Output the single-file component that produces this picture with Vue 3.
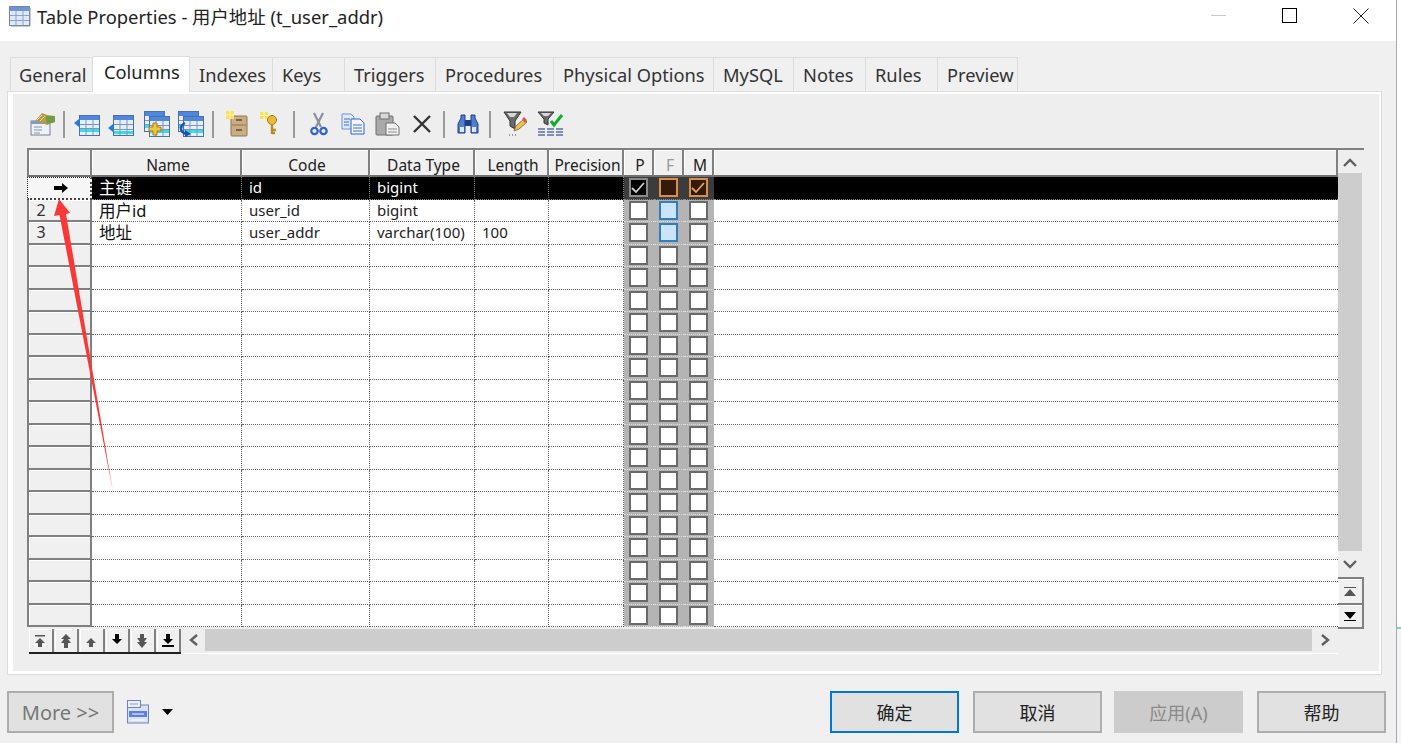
<template>
  <div class="screen">
    <div class="window">
      <div class="titlebar">
        <svg class="title-icon" width="22" height="21" viewBox="0 0 22 21">
          <rect x="0.5" y="0.5" width="20" height="19" fill="#dfe8f6" stroke="#6f87aa" />
          <rect x="1" y="1" width="19" height="4" fill="#6f93d6" />
          <path d="M1 9.5h19M1 14.5h19M7 5v14M14 5v14" stroke="#8ba3cc" fill="none" />
          <path d="M21 2v18H2" stroke="#8f8f8f" fill="none" />
        </svg>
        <span class="title-text">Table Properties - 用户地址 (t_user_addr)</span>
        <div class="win-controls">
          <svg width="16" height="16" viewBox="0 0 16 16"><path d="M0 7.5h15" stroke="#c8c8c8" /></svg>
          <svg width="16" height="16" viewBox="0 0 16 16"><rect x="0.5" y="0.5" width="14" height="14" fill="none" stroke="#000" /></svg>
          <svg width="16" height="16" viewBox="0 0 16 16"><path d="M0.5 0.5l15 15M15.5 0.5l-15 15" stroke="#222" fill="none" /></svg>
        </div>
      </div>

      <div class="tabs">
        <div
          v-for="tab in tabs"
          :key="tab.label"
          class="tab"
          :class="{ active: tab.label === 'Columns' }"
          :style="{ width: tab.width + 'px' }"
        >
          {{ tab.label }}
        </div>
      </div>

      <div class="panel">
        <div class="panel-inner">
          <div class="toolbar">
            <!-- properties -->
            <svg class="tool" style="margin-left:2px" width="26" height="24" viewBox="0 0 26 24">
              <rect x="1" y="9" width="19" height="14" fill="#eef2f8" stroke="#77808f" />
              <rect x="1" y="9" width="19" height="3" fill="#7d9cc9" />
              <path d="M4 15h8M4 18h8M4 21h6" stroke="#8a94a5" />
              <path d="M5 9l7-8 5 2 8 1v6l-8 3-5-2z" fill="#b49a4a" />
              <path d="M16 4l9 0v6l-8 2z" fill="#6b9e45" />
              <path d="M7 8l5-5M10 9l5-5" stroke="#f2dc8c" />
            </svg>
            <i class="sep" />
            <svg class="tool" style="margin-left:-2px" width="26" height="24" viewBox="0 0 26 24"><use href="#tbl" x="5" y="3" /><path d="M0 11l5-4v8z" fill="#1c7fe0" /></svg>
            <svg class="tool" style="margin-left:8px" width="26" height="24" viewBox="0 0 26 24"><use href="#tbl2" x="5" y="3" /><path d="M0 16l5-4v8z" fill="#1c7fe0" /></svg>
            <svg class="tool" style="margin-left:10px" width="26" height="26" viewBox="0 0 26 26">
              <use href="#tbl" x="0" y="0" />
              <use href="#tbl" x="5" y="5" />
              <path d="M5 16h4v-4h4v4h4v4h-4v4H9v-4H5z" fill="#f2c53a" stroke="#a67e14" />
            </svg>
            <svg class="tool" style="margin-left:8px" width="26" height="26" viewBox="0 0 26 26">
              <use href="#tbl" x="0" y="0" />
              <use href="#tbl" x="5" y="5" />
              <path d="M7 12c-6 3-5 9 1 11" fill="none" stroke="#1d4fb3" stroke-width="2.4" />
              <path d="M7 19l6 4-6 3z" fill="#1d4fb3" />
            </svg>
            <i class="sep" style="margin-left:8px" />
            <!-- new file cabinet -->
            <svg class="tool" width="24" height="26" viewBox="0 0 24 26">
              <rect x="6" y="5" width="16" height="20" rx="1" fill="#c9ad85" stroke="#8e7550" />
              <path d="M7 14h14" stroke="#8e7550" />
              <path d="M11 9h6M11 19h6" stroke="#5f4b2e" stroke-width="1.5" />
              <rect x="1" y="0" width="8" height="8" fill="#f8e25a" />
              <path d="M5 0v8M1 4h8" stroke="#fff8c0" />
            </svg>
            <!-- new key -->
            <svg class="tool" style="margin-left:10px" width="22" height="24" viewBox="0 0 22 24">
              <rect x="1" y="0" width="8" height="7" fill="#f8e25a" />
              <path d="M5 0v7M1 3.500h8" stroke="#fff8c0" />
              <circle cx="13" cy="8" r="4.500" fill="#e8b93a" stroke="#a67e14" />
              <path d="M13 12v10M13 18h4M13 21h3" stroke="#b88c1d" stroke-width="2.4" fill="none" />
            </svg>
            <i class="sep" style="margin-left:12px" />
            <!-- cut -->
            <svg class="tool" style="margin-left:4px" width="18" height="24" viewBox="0 0 18 24">
              <path d="M4 1l7 14M13 1L6 15" stroke="#8b8f96" stroke-width="2.2" fill="none" />
              <circle cx="4.500" cy="19" r="3.200" fill="none" stroke="#2f62c9" stroke-width="2.2" />
              <circle cx="13.500" cy="19" r="3.200" fill="none" stroke="#2f62c9" stroke-width="2.2" />
            </svg>
            <!-- copy -->
            <svg class="tool" style="margin-left:13px" width="24" height="22" viewBox="0 0 24 22">
              <path d="M1 1h9l3 3v12H1z" fill="#dfe9fb" stroke="#6f93d6" />
              <path d="M10 6h9l4 4v11H10z" fill="#f2f6fe" stroke="#2f62c9" />
              <path d="M12 12h9M12 15h9M12 18h9M3 6h6M3 9h5M3 12h5" stroke="#3c6fd0" />
            </svg>
            <!-- paste -->
            <svg class="tool" style="margin-left:10px" width="25" height="24" viewBox="0 0 25 24">
              <rect x="1" y="4" width="17" height="19" rx="1" fill="#a9a9a9" stroke="#6e6e6e" />
              <rect x="5" y="1" width="9" height="6" fill="#d8d8d8" stroke="#6e6e6e" />
              <path d="M11 11h9l4 4v8H11z" fill="#f2f2f2" stroke="#6e6e6e" />
              <path d="M13 17h9M13 20h9" stroke="#8a8a8a" />
            </svg>
            <!-- delete -->
            <svg class="tool" style="margin-left:12px" width="20" height="20" viewBox="0 0 20 20">
              <path d="M2 2l16 16M18 2L2 18" stroke="#333" stroke-width="2.4" />
            </svg>
            <i class="sep" style="margin-left:11px" />
            <!-- find -->
            <svg class="tool" width="24" height="22" viewBox="0 0 24 22">
              <path d="M2 20V11l3-6V2h4v18z" fill="#4f7fd0" stroke="#1f3f85" />
              <path d="M22 20V11l-3-6V2h-4v18z" fill="#4f7fd0" stroke="#1f3f85" />
              <rect x="9" y="7" width="6" height="6" fill="#1f3f85" />
              <rect x="4" y="14" width="4" height="5" fill="#dfe9fb" />
              <rect x="16" y="14" width="4" height="5" fill="#dfe9fb" />
            </svg>
            <i class="sep" style="margin-left:9px" />
            <!-- filter + pencil -->
            <svg class="tool" style="margin-left:1px" width="26" height="26" viewBox="0 0 26 26">
              <path d="M1 1h17l-6 9v8l-5-3v-5z" fill="#6b6b6b" stroke="#333" />
              <path d="M4 2h10l-3 4H7z" fill="#d8d8d8" />
              <path d="M11 20l2-5 8-7 3 3-8 7z" fill="#efc24a" stroke="#8e7550" />
              <path d="M19 8l2-2 3 3-2 3z" fill="#d8584a" />
              <path d="M6 24h1M9 24h1M12 24h1" stroke="#444" />
            </svg>
            <!-- filter + check -->
            <svg class="tool" style="margin-left:8px" width="27" height="26" viewBox="0 0 27 26">
              <path d="M1 1h16l-6 7v6l-4-2V8z" fill="#6b6b6b" stroke="#333" />
              <path d="M4 2h10l-3 3H7z" fill="#d8d8d8" />
              <path d="M14 10l3 4 8-10" fill="none" stroke="#0fae2a" stroke-width="3" />
              <path d="M1 18h7M10 18h7M19 18h7M1 21h7M10 21h7M19 21h7M1 24h7M10 24h7M19 24h7" stroke="#5a6fa8" stroke-width="1.6" />
            </svg>
          </div>

          <div class="grid-frame">
            <div class="table">
              <div v-for="col in columns" :key="col.label" class="head-cell" :class="{ dim: col.dim }">
                {{ col.label }}
              </div>
              <template v-for="(row, i) in rows" :key="i">
                <div class="row-head" :class="{ current: i === 0 }">
                  <svg v-if="i === 0" width="14" height="10" viewBox="0 0 14 10">
                    <path d="M0 3h8V0l6 5-6 5V7H0z" fill="#000" />
                  </svg>
                  <span v-else-if="row.name">{{ i + 1 }}</span>
                </div>
                <div class="cell cell-name" :class="{ sel: i === 0 }">{{ row.name }}</div>
                <div class="cell" :class="{ sel: i === 0 }">{{ row.code }}</div>
                <div class="cell" :class="{ sel: i === 0 }">{{ row.type }}</div>
                <div class="cell" :class="{ sel: i === 0 }">{{ row.length }}</div>
                <div class="cell" :class="{ sel: i === 0 }"></div>
                <div v-for="flag in ['p', 'f', 'm']" :key="flag" class="check-cell" :class="{ sel: i === 0 }">
                  <span class="box" :class="boxClass(row, flag, i)">
                    <svg v-if="row[flag]" width="14" height="12" viewBox="0 0 14 12">
                      <path d="M1 6l4 4 8-9" fill="none" stroke-width="1.800" />
                    </svg>
                  </span>
                </div>
                <div class="cell cell-last" :class="{ sel: i === 0 }"></div>
              </template>
            </div>

            <div class="vbar">
              <div class="v-arrow">
                <svg width="14" height="9" viewBox="0 0 14 9"><path d="M1 8l6-6 6 6" fill="none" stroke="#606060" stroke-width="2.400" /></svg>
              </div>
              <div class="v-thumb" />
              <div class="v-arrow v-arrow-down">
                <svg width="14" height="9" viewBox="0 0 14 9"><path d="M1 1l6 6 6-6" fill="none" stroke="#606060" stroke-width="2.400" /></svg>
              </div>
              <div class="v-btn">
                <svg width="12" height="9" viewBox="0 0 12 9"><path d="M0 0h12v1H0zM6 2l6 7H0z" fill="#555" /></svg>
              </div>
              <div class="v-btn">
                <svg width="12" height="9" viewBox="0 0 12 9"><path d="M0 8h12v1H0zM6 7L0 0h12z" fill="#000" /></svg>
              </div>
            </div>

            <div class="hbar">
              <div class="nav">
                <button v-for="btn in navButtons" :key="btn.d" class="nav-btn">
                  <svg width="16" height="16" viewBox="0 0 16 16"><path :d="btn.d" :fill="btn.dark ? '#000' : '#555'" /></svg>
                </button>
              </div>
              <div class="h-arrow">
                <svg width="9" height="12" viewBox="0 0 9 12"><path d="M8 1L2 6l6 5" fill="none" stroke="#606060" stroke-width="2.400" /></svg>
              </div>
              <div class="h-thumb" />
              <div class="h-arrow h-arrow-right">
                <svg width="9" height="12" viewBox="0 0 9 12"><path d="M1 1l6 5-6 5" fill="none" stroke="#606060" stroke-width="2.400" /></svg>
              </div>
            </div>
          </div>
        </div>
      </div>

      <div class="footer">
        <button class="btn btn-more">More &gt;&gt;</button>
        <svg class="save-icon" width="22" height="24" viewBox="0 0 22 24">
          <rect x="0.500" y="5" width="21" height="18" fill="#d8e2f2" stroke="#6f87aa" />
          <rect x="0.500" y="0.500" width="13" height="7" fill="#e8eef8" stroke="#6f87aa" />
          <path d="M3 4h8" stroke="#8ba3cc" />
          <rect x="2" y="11" width="18" height="6" fill="#5c7fe8" />
          <path d="M5 14h12M4 20h14" stroke="#fff" />
        </svg>
        <svg class="drop-icon" width="11" height="6" viewBox="0 0 11 6"><path d="M0 0h11L5.500 6z" fill="#000" /></svg>
        <div class="footer-actions">
          <button class="btn btn-default">确定</button>
          <button class="btn btn-gap">取消</button>
          <button class="btn btn-disabled">应用(A)</button>
          <button class="btn btn-gap">帮助</button>
        </div>
      </div>
    </div>

    <div class="edge">
      <div class="edge-top" />
      <div class="edge-line" />
    </div>

    <!-- red annotation arrow drawn over the grid -->
    <svg class="annotation" width="70" height="300" viewBox="0 0 70 300">
      <path d="M12 2L23 16 19 17 66 295 12.500 18 7 19z" fill="#fb3838" />
    </svg>

    <svg width="0" height="0" class="defs">
      <symbol id="tbl" viewBox="0 0 21 21" width="21" height="21">
        <rect x="0.500" y="0.500" width="20" height="20" fill="#e6eefb" stroke="#4f6f9f" />
        <rect x="1" y="1" width="19" height="4" fill="#4f87e0" />
        <rect x="1" y="14" width="19" height="3" fill="#35dfe6" />
        <path d="M1 9.500h19M1 13.500h19M7 5v15M14 5v15" stroke="#7f95b8" fill="none" />
      </symbol>
      <symbol id="tbl2" viewBox="0 0 21 21" width="21" height="21">
        <rect x="0.500" y="0.500" width="20" height="20" fill="#e6eefb" stroke="#4f6f9f" />
        <rect x="1" y="1" width="19" height="4" fill="#4f87e0" />
        <rect x="1" y="16" width="19" height="3" fill="#35dfe6" />
        <path d="M1 9.500h19M1 14.500h19M7 5v15M14 5v15" stroke="#7f95b8" fill="none" />
      </symbol>
    </svg>
  </div>
</template>

<script setup>
const tabs = [
  { label: "General", width: 83 },
  { label: "Columns", width: 97 },
  { label: "Indexes", width: 83 },
  { label: "Keys", width: 72 },
  { label: "Triggers", width: 91 },
  { label: "Procedures", width: 118 },
  { label: "Physical Options", width: 160 },
  { label: "MySQL", width: 80 },
  { label: "Notes", width: 72 },
  { label: "Rules", width: 72 },
  { label: "Preview", width: 80 },
];

const columns = [
  { label: "" },
  { label: "Name" },
  { label: "Code" },
  { label: "Data Type" },
  { label: "Length" },
  { label: "Precision" },
  { label: "P" },
  { label: "F", dim: true },
  { label: "M" },
  { label: " " },
];

const filled = [
  { name: "主键", code: "id", type: "bigint", length: "", p: true, f: false, m: true },
  { name: "用户id", code: "user_id", type: "bigint", length: "", fk: true },
  { name: "地址", code: "user_addr", type: "varchar(100)", length: "100", fk: true },
];
const rows = [...filled, ...Array.from({ length: 17 }, () => ({}))];

const navButtons = [
  { d: "M3 2h10v1.500H3zM8 5l5 5h-3v4H6v-4H3z" },
  { d: "M8 1l5 5h-3l3 4h-3v5H6v-5H3l3-4H3z" },
  { d: "M8 5l5 5h-3v4H6v-4H3z" },
  { d: "M6 1h4v5h3l-5 5-5-5h3z", dark: true },
  { d: "M6 1h4v4h3l-3 4h3l-5 6-5-6h3L3 5h3z" },
  { d: "M6 1h4v5h3l-5 5-5-5h3zM2 12h12v2H2z", dark: true },
];

const boxClass = (row, flag, i) => {
  if (i === 0) return flag === "p" ? "box-sel" : "box-sel-key";
  if (flag === "f" && row.fk) return "box-fk";
  return "";
};
</script>

<style>
html,
body {
  margin: 0;
  overflow: hidden;
  background: #fff;
}
</style>

<style scoped>
.screen {
  position: relative;
  display: flex;
  width: 1401px;
  height: 743px;
  font-family: "Noto Sans", "Noto Sans CJK SC", sans-serif;
  color: #111;
  overflow: hidden;
}

.window {
  display: flex;
  flex-direction: column;
  width: 1397px;
  height: 743px;
  box-sizing: border-box;
  background: #f0f0f0;
  border-right: 1px solid #a8a8a8;
}

.edge {
  flex: 1;
  display: flex;
  flex-direction: column;
  background: #f1f5f5;
}

.edge-top {
  height: 627px;
  background: #fff;
}

.edge-line {
  height: 2px;
  background: #8fc9c4;
}

.titlebar {
  display: flex;
  align-items: center;
  height: 41px;
  padding: 0 27px 9px 9px;
  box-sizing: border-box;
  background: #fff;
}

.title-icon {
  margin-right: 6px;
}

.title-text {
  font-size: 18.400px;
  color: #222;
}

.win-controls {
  display: flex;
  gap: 55px;
  margin-left: auto;
}

.tabs {
  display: flex;
  align-items: flex-end;
  height: 36px;
  margin-top: 14px;
  padding-left: 10px;
}

.tab {
  height: 34px;
  box-sizing: border-box;
  padding-left: 9px;
  border: 1px solid #dcdcdc;
  border-left-width: 0;
  border-bottom: none;
  font-size: 18.300px;
  line-height: 34px;
  white-space: nowrap;
  color: #333;
}

.tab:first-child {
  border-left-width: 1px;
  padding-left: 8px;
}

.tab.active {
  height: 36px;
  padding-left: 11px;
  background: #fff;
  border-color: #dcdcdc;
  line-height: 30px;
  color: #222;
  position: relative;
  z-index: 1;
  margin-bottom: -1px;
}

.panel {
  width: 1375px;
  height: 584px;
  margin-left: 7px;
  box-sizing: border-box;
  border: 1px solid #dcdcdc;
}

.panel-inner {
  display: flex;
  flex-direction: column;
  height: 100%;
  box-sizing: border-box;
  padding: 0 15px 0 14px;
  border-style: solid;
  border-color: #fff;
  border-width: 2px 2px 3px 5px;
  background: #eee;
}

.toolbar {
  display: flex;
  align-items: center;
  height: 54px;
  padding: 6px 0 0 1px;
  box-sizing: border-box;
}

.tool {
  flex: none;
}

.sep {
  flex: none;
  width: 2px;
  height: 27px;
  margin: 0 11px 0 7px;
  background: #9a9a9a;
}

.grid-frame {
  display: grid;
  grid-template-columns: 1311px 26px;
  grid-template-rows: 477px 27px;
  border-top: 2px solid #808080;
}

.table {
  display: grid;
  grid-template-columns: 65px 150px 128px 105px 74px 75px 30px 30px 30px 1fr;
  grid-template-rows: 27px repeat(20, 22.500px);
  background: #fff;
}

.head-cell {
  box-sizing: border-box;
  padding: 2px 0 0 4px;
  font-size: 15.500px;
  line-height: 26px;
  text-align: center;
  white-space: nowrap;
  overflow: hidden;
  color: #222;
  background: #f0f0f0;
  border-right: 2px solid #808080;
  border-bottom: 2px solid #707070;
  box-shadow: inset 1px 1px 0 #fff;
}

.head-cell:first-child {
  border-left: 2px solid #808080;
}

.head-cell:last-child {
  border-right: none;
  background: #f7f7f7;
}

.head-cell.dim {
  color: #999;
}

.row-head {
  display: flex;
  align-items: center;
  justify-content: center;
  box-sizing: border-box;
  font-size: 16px;
  padding-right: 37px;
  background: #f0f0f0;
  color: #333;
  border-left: 2px solid #808080;
  border-right: 2px solid #808080;
  border-bottom: 2px solid #808080;
  box-shadow: inset 1px 1px 0 #fff;
}

.row-head.current {
  padding-right: 0;
  padding-left: 4px;
  border: 1px dotted #222;
  border-right: 2px dotted #444;
  border-bottom: 2px dotted #444;
  box-shadow: none;
  background: #f6f6f6;
}

.cell {
  box-sizing: border-box;
  padding-left: 7px;
  font-size: 15px;
  line-height: 21px;
  white-space: nowrap;
  overflow: hidden;
  color: #222;
  border-right: 1px dotted #666;
  border-bottom: 1px dotted #666;
}

.cell-name {
  font-size: 16.500px;
  color: #111;
}

.cell-last {
  border-right: none;
}

.cell.sel {
  background: #000;
  color: #fff;
  border-bottom-color: #888;
  border-right-color: #888;
}

.check-cell {
  display: flex;
  align-items: center;
  justify-content: center;
  box-sizing: border-box;
  padding-right: 2px;
  background: #b4b4b4;
  border-bottom: 1px dotted #ddd;
}

.check-cell.sel {
  background: #3c3c3c;
  border-bottom-color: #888;
}

.box {
  display: flex;
  align-items: center;
  justify-content: center;
  width: 19px;
  height: 19px;
  box-sizing: border-box;
  background: #fff;
  border: 2px solid #6a6a6a;
}

.box svg path {
  stroke: #ccc;
}

.box-fk {
  background: #cce4f7;
  border-color: #2f7fbd;
}

.box-sel {
  background: #000;
  border-color: #8a8a8a;
}

.box-sel-key {
  background: #341a08;
  border-color: #d98e4e;
}

.box-sel-key svg path {
  stroke: #e5a063;
}

.vbar {
  grid-column: 2;
  grid-row: 1 / 3;
  display: flex;
  flex-direction: column;
  align-items: flex-start;
  height: 479px;
}

.v-arrow {
  display: flex;
  align-items: center;
  justify-content: center;
  width: 24px;
  height: 23px;
  flex: none;
  padding-top: 2px;
  box-sizing: border-box;
}

.v-arrow-down {
  height: 26px;
  padding-top: 0;
}

.v-thumb {
  width: 24px;
  height: 378px;
  flex: none;
  background: #cdcdcd;
}

.v-btn {
  display: flex;
  align-items: center;
  justify-content: center;
  width: 26px;
  height: 26px;
  flex: none;
  box-sizing: border-box;
  background: #f0f0f0;
  box-shadow: inset 1px 1px 0 #fff;
  border-top: 2px solid #808080;
  border-right: 2px solid #808080;
}

.v-btn:last-child {
  border-bottom: 2px solid #808080;
}

.hbar {
  grid-column: 1;
  grid-row: 2;
  display: flex;
  align-items: flex-start;
  padding: 2px 0 0 2px;
  border-bottom: 1px solid #fff;
}

.nav {
  display: flex;
  gap: 1px;
  height: 23px;
  border-bottom: 2px solid #222;
}

.nav-btn {
  display: flex;
  align-items: center;
  justify-content: center;
  width: 24.500px;
  height: 23px;
  padding: 0;
  box-sizing: border-box;
  background: #f0f0f0;
  border: none;
  border-right: 2px solid #808080;
  box-shadow: inset 1px 1px 0 #fff;
}

.h-arrow {
  display: flex;
  align-items: center;
  justify-content: center;
  width: 24px;
  height: 22px;
  flex: none;
}

.h-arrow-right {
  width: 26px;
}

.h-thumb {
  flex: 1;
  height: 22px;
  background: #cdcdcd;
}

.footer {
  flex: 1;
  display: flex;
  align-items: flex-start;
  padding: 16px 10px 0 7px;
}

.btn {
  width: 129px;
  height: 42px;
  padding: 0;
  box-sizing: border-box;
  background: #e1e1e1;
  border: 2px solid #adadad;
  font-family: inherit;
  font-size: 18px;
  color: #222;
}

.btn-more {
  width: 107px;
  font-size: 20px;
  color: #777;
}

.save-icon {
  margin: 9px 0 0 13px;
}

.drop-icon {
  margin: 18px 0 0 13px;
}

.footer-actions {
  display: flex;
  margin-left: auto;
}

.btn-default {
  border-color: #0078d7;
}

.btn-gap {
  margin-left: 14px;
}

.btn-disabled {
  margin-left: 12px;
  background: #ccc;
  border-color: #ccc;
  color: #8a8a8a;
}

.annotation {
  position: absolute;
  left: 47px;
  top: 197px;
}

.defs {
  position: absolute;
}
</style>
